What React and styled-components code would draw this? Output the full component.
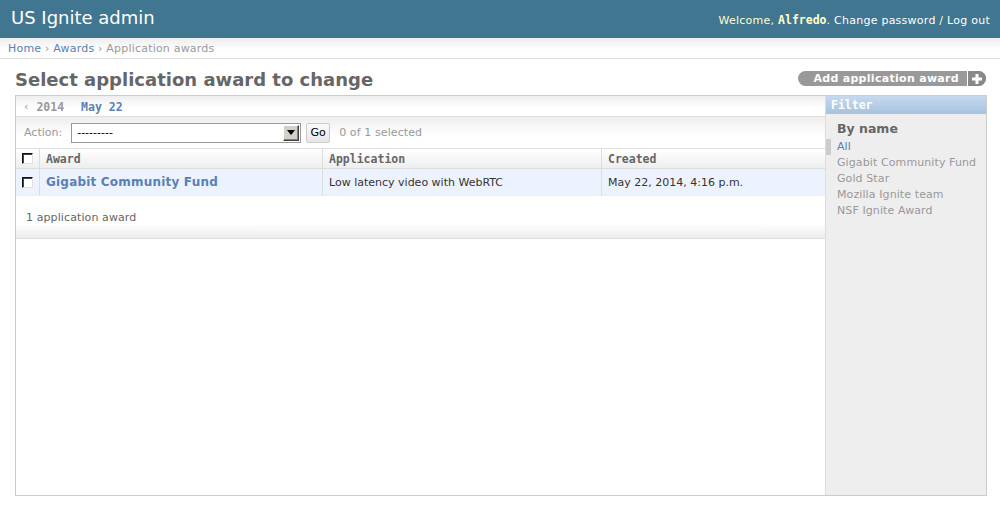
import styled, { createGlobalStyle } from 'styled-components'

const MONO = `"DejaVu Sans Mono", "Liberation Mono", monospace`

const GlobalStyle = createGlobalStyle`
  html, body {
    margin: 0;
    padding: 0;
    background: #fff;
  }
  body {
    font-family: "DejaVu Sans", Verdana, sans-serif;
    font-size: 11px;
    color: #333;
  }
`

const Header = styled.header`
  height: 38px;
  box-sizing: border-box;
  padding: 0 10px 0 11px;
  background: #417690;
  display: flex;
  align-items: center;
  justify-content: space-between;
`

const SiteName = styled.h1`
  margin: -2px 0 0;
  font-size: 18px;
  font-weight: normal;
  line-height: 22px;
  color: #fff;
`

const UserTools = styled.div`
  margin-top: 2px;
  font-size: 11px;
  letter-spacing: 0.25px;
  color: #ffc;
`

const UserName = styled.strong`
  font-family: ${MONO};
  font-size: 11.5px;
  letter-spacing: 0;
`

const HeaderLink = styled.a`
  color: #fff;
  text-decoration: none;
`

const Breadcrumbs = styled.nav`
  height: 19px;
  padding: 1px 8px 0;
  line-height: 19px;
  font-size: 11px;
  letter-spacing: 0.2px;
  color: #999;
  background: linear-gradient(#eee, #fff 60%);
  border-bottom: 1px solid #ddd;
`

const Crumb = styled.a`
  color: #5b80b2;
  text-decoration: none;
`

const Content = styled.main`
  padding: 0 13px 0 15px;
`

const TitleRow = styled.div`
  height: 36px;
  display: flex;
  align-items: flex-start;
  justify-content: space-between;
`

const Title = styled.h1`
  margin: 10px 0 0;
  font-size: 18px;
  line-height: 22px;
  color: #666;
`

const AddButton = styled.a`
  margin: 12px 1px 0 0;
  height: 15px;
  display: inline-flex;
  border-radius: 8px;
  overflow: hidden;
  background: #999;
  color: #fff;
  text-decoration: none;
  font-size: 11px;
  font-weight: bold;
  letter-spacing: 0.3px;
  line-height: 15px;
`

const AddLabel = styled.span`
  padding: 0 8px 0 15px;
`

const AddIcon = styled.span`
  width: 18px;
  border-left: 1px solid #fff;
  background: #888;
  display: flex;
  align-items: center;
  justify-content: center;
`

const Module = styled.div`
  height: 399px;
  border: 1px solid #ccc;
  display: flex;
`

const ChangeList = styled.div`
  flex: 1;
  min-width: 0;
`

const DateRow = styled.div`
  height: 19px;
  padding: 1px 0 0 8px;
  display: flex;
  align-items: center;
  gap: 7px;
  border-bottom: 1px solid #ddd;
  background: linear-gradient(#eee, #fff 60%);
  color: #999;
`

const DateLink = styled.a`
  font-family: ${MONO};
  font-size: 11.5px;
  font-weight: bold;
  color: ${p => (p.$current ? '#5b80b2' : '#999')};
  margin: ${p => (p.$current ? '0' : '0 10px 0 1px')};
  text-decoration: none;
`

const ActionRow = styled.div`
  height: 31px;
  padding-left: 8px;
  display: flex;
  align-items: center;
  background: linear-gradient(#eee, #fff 60%);
`

const ActionLabel = styled.span`
  color: #999;
  margin-right: 9px;
`

const SelectBox = styled.div`
  width: 223px;
  height: 18px;
  border: 1px solid #999;
  background: #fff;
  display: flex;
  align-items: center;
  justify-content: space-between;
  padding-left: 5px;
  color: #000;
  font-size: 11px;
`

const SelectArrow = styled.span`
  width: 14px;
  height: 14px;
  margin-right: 1px;
  background: #d4d0c8;
  border: 1px solid;
  border-color: #fff #404040 #404040 #fff;
  box-shadow: inset -1px -1px 0 #808080;
  display: flex;
  align-items: center;
  justify-content: center;
`

const GoButton = styled.button`
  margin-left: 5px;
  height: 20px;
  width: 24px;
  padding: 0;
  border: 1px solid #ccc;
  border-radius: 2px;
  background: linear-gradient(#fafafa, #e6e6e6);
  font-family: "DejaVu Sans", Verdana, sans-serif;
  font-size: 11px;
  color: #000;
`

const Counter = styled.span`
  margin-left: 9px;
  letter-spacing: 0.1px;
  color: #999;
`

const Grid = styled.div`
  display: grid;
  grid-template-columns: 23px 283px 279px 1fr;
`

const HeadCell = styled.div`
  height: 19px;
  display: flex;
  align-items: center;
  justify-content: ${p => (p.$check ? 'center' : 'flex-start')};
  padding-left: ${p => (p.$check ? 0 : '6px')};
  border-top: 1px solid #ddd;
  border-bottom: 1px solid #ddd;
  border-left: ${p => (p.$check ? 'none' : '1px solid #ddd')};
  background: linear-gradient(#fff, #eee);
  font-family: ${MONO};
  font-size: 11.5px;
  font-weight: bold;
  color: #666;
`

const Cell = styled.div`
  height: 26px;
  display: flex;
  align-items: center;
  justify-content: ${p => (p.$check ? 'center' : 'flex-start')};
  padding-left: ${p => (p.$check ? 0 : '6px')};
  border-bottom: 1px solid #eee;
  border-left: ${p => (p.$check ? 'none' : '1px solid #ddd')};
  background: #edf3fe;
  color: #333;
`

const RowLink = styled.a`
  margin-top: -1px;
  color: #5b80b2;
  font-size: 12px;
  font-weight: bold;
  letter-spacing: 0.2px;
  text-decoration: none;
`

const CheckBox = styled.span`
  width: 9px;
  height: 9px;
  background: #fff;
  border: 1px solid;
  border-color: #111 #e0e0e0 #e0e0e0 #111;
  box-shadow: inset 1px 1px 0 #444;
`

const Paginator = styled.p`
  margin: 0;
  height: 42px;
  line-height: 43px;
  padding-left: 10px;
  border-bottom: 1px solid #ddd;
  background: linear-gradient(#fff 65%, #ececec);
  letter-spacing: 0.1px;
  color: #666;
`

const Filter = styled.aside`
  width: 160px;
  flex-shrink: 0;
  border-left: 1px solid #ddd;
  background: #eee;
`

const FilterTitle = styled.h2`
  margin: 0;
  height: 18px;
  line-height: 18px;
  padding-left: 5px;
  background: linear-gradient(#c6d9ee, #a6c2df);
  font-family: ${MONO};
  font-size: 11.5px;
  font-weight: bold;
  color: #fff;
`

const FilterHeading = styled.h3`
  margin: 7px 0 2px;
  padding-left: 11px;
  font-size: 12.5px;
  line-height: 16px;
  color: #666;
`

const FilterList = styled.ul`
  margin: 0;
  padding: 0 0 0 11px;
  list-style: none;
  letter-spacing: 0.1px;
`

const FilterItem = styled.li`
  line-height: 16px;
  color: ${p => (p.$selected ? '#5b80b2' : '#999')};
  ${p => p.$selected && `
    margin-left: -11px;
    padding-left: 6px;
    border-left: 5px solid #ccc;
  `}
`

const filters = ['All', 'Gigabit Community Fund', 'Gold Star', 'Mozilla Ignite team', 'NSF Ignite Award']

export default function App() {
  return (
    <>
      <GlobalStyle />
      <Header>
        <SiteName>US Ignite admin</SiteName>
        <UserTools>
          Welcome, <UserName>Alfredo</UserName>.{' '}
          <HeaderLink href="#">Change password</HeaderLink> / <HeaderLink href="#">Log out</HeaderLink>
        </UserTools>
      </Header>
      <Breadcrumbs>
        <Crumb href="#">Home</Crumb> › <Crumb href="#">Awards</Crumb> › Application awards
      </Breadcrumbs>
      <Content>
        <TitleRow>
          <Title>Select application award to change</Title>
          <AddButton href="#">
            <AddLabel>Add application award</AddLabel>
            <AddIcon>
              <svg width="10" height="10" viewBox="0 0 10 10">
                <rect x="3.5" y="0" width="3" height="10" fill="#fff" />
                <rect x="0" y="3.5" width="10" height="3" fill="#fff" />
              </svg>
            </AddIcon>
          </AddButton>
        </TitleRow>
        <Module>
          <ChangeList>
            <DateRow>
              ‹ <DateLink href="#">2014</DateLink>
              <DateLink href="#" $current>May 22</DateLink>
            </DateRow>
            <ActionRow>
              <ActionLabel>Action:</ActionLabel>
              <SelectBox>
                ---------
                <SelectArrow>
                  <svg width="8" height="5" viewBox="0 0 8 5">
                    <path d="M0 0h8L4 5z" fill="#000" />
                  </svg>
                </SelectArrow>
              </SelectBox>
              <GoButton>Go</GoButton>
              <Counter>0 of 1 selected</Counter>
            </ActionRow>
            <Grid>
              <HeadCell $check><CheckBox /></HeadCell>
              <HeadCell>Award</HeadCell>
              <HeadCell>Application</HeadCell>
              <HeadCell>Created</HeadCell>
              <Cell $check><CheckBox /></Cell>
              <Cell><RowLink href="#">Gigabit Community Fund</RowLink></Cell>
              <Cell>Low latency video with WebRTC</Cell>
              <Cell>May 22, 2014, 4:16 p.m.</Cell>
            </Grid>
            <Paginator>1 application award</Paginator>
          </ChangeList>
          <Filter>
            <FilterTitle>Filter</FilterTitle>
            <FilterHeading>By name</FilterHeading>
            <FilterList>
              {filters.map((f, i) => (
                <FilterItem key={f} $selected={i === 0}>{f}</FilterItem>
              ))}
            </FilterList>
          </Filter>
        </Module>
      </Content>
    </>
  )
}
